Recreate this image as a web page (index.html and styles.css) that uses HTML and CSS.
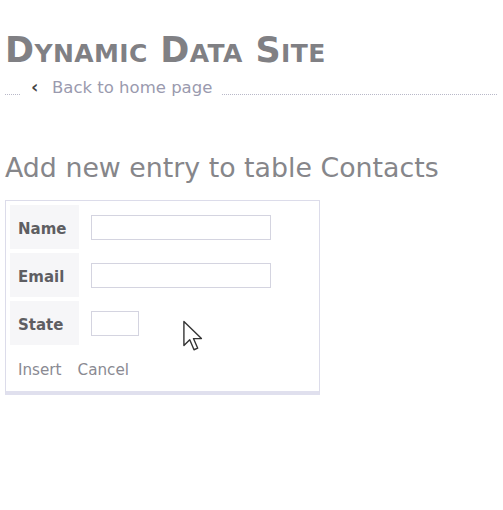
FILE: index.html
```html
<!DOCTYPE html>
<html>
<head>
<meta charset="utf-8">
<link rel="stylesheet" href="styles.css">
</head>
<body>
<div class="page">
  <h1 class="site-title">Dynamic Data Site</h1>
  <div class="backbar">
    <span class="dots dots-left"></span>
    <span class="chev">&#8249;</span>
    <a class="back" href="#">Back to home page</a>
    <span class="dots dots-right"></span>
  </div>
  <h2 class="entry-title">Add new entry to table Contacts</h2>
  <div class="detail">
    <table class="fields">
      <tr><th>Name</th><td><input class="box wide" type="text"></td></tr>
      <tr><th>Email</th><td><input class="box wide" type="text"></td></tr>
      <tr><th>State</th><td><input class="box narrow" type="text"></td></tr>
    </table>
    <div class="actions"><a href="#">Insert</a><a href="#">Cancel</a></div>
    <svg class="cursor" width="24" height="34" viewBox="0 0 22 32">
      <path d="M1.5 1.5 L1.5 24 L7 18.5 L11 28 L14.5 26.5 L10.5 17.5 L18 17.5 Z" fill="#fff" stroke="#333" stroke-width="1.3" stroke-linejoin="round"/>
    </svg>
  </div>
</div>
</body>
</html>
```
FILE: styles.css
```css
html, body { margin: 0; padding: 0; background: #fff; }
body { font-family: "DejaVu Sans", Verdana, sans-serif; color: #777; }
.page { padding: 30px 0 0 5px; }
.site-title {
  margin: 0;
  font-family: "DejaVu Sans", sans-serif;
  font-variant: small-caps;
  font-weight: bold;
  font-size: 35px;
  line-height: 40px;
  letter-spacing: 0.4px;
  color: #808084;
}
.backbar { display: flex; align-items: baseline; margin-top: 6px; height: 26px; }
.dots { border-bottom: 1px dotted #b8b8c8; height: 1px; align-self: center; margin-top: 10px; }
.dots-left { width: 15px; }
.dots-right { flex: 1; margin-left: 10px; margin-right: 6px; }
.chev { color: #444; font-weight: bold; font-size: 18px; margin-left: 11px; width: 21px; }
.back { color: #9a9aae; text-decoration: none; font-size: 16.5px; font-family: "DejaVu Sans", sans-serif; }
.entry-title {
  margin: 50px 0 0;
  font-weight: normal;
  font-size: 26.8px;
  line-height: 32px;
  color: #86868a;
  font-family: "DejaVu Sans", sans-serif;
}
.detail {
  position: relative;
  margin-top: 16px;
  width: 313px;
  border: 1px solid #dcdcea;
  border-bottom: 4px solid #e0e0ee;
  padding: 0 0 12px;
  background: #fff;
}
.fields { border-collapse: separate; border-spacing: 3px 4px; margin-left: 1px; }
.fields th {
  background: #f6f6f8;
  text-align: left;
  font-size: 15px;
  color: #5e5e62;
  width: 69px;
  height: 44px;
  padding: 3px 0 0 8px;
  box-sizing: border-box;
}
.fields td { padding: 0 0 0 9px; }
.box { display: block; height: 25px; box-sizing: border-box; border: 1px solid #d4d4e0; background: #fff; margin: 0; padding: 0; }
.wide { width: 180px; }
.narrow { width: 48px; }
.actions { display: flex; gap: 16px; padding-left: 12px; margin-top: 12px; font-size: 15.2px; }
.actions a { color: #8a8a92; text-decoration: none; }
.cursor { position: absolute; left: 176px; top: 119px; }
```
